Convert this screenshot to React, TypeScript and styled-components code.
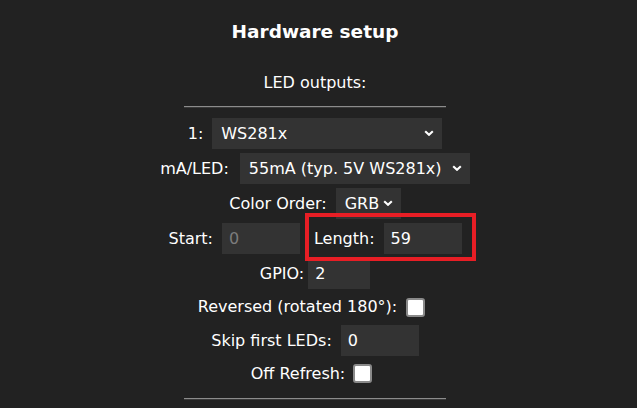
import React from "react";
import styled, { createGlobalStyle } from "styled-components";

const Global = createGlobalStyle`
  html, body { margin: 0; padding: 0; background: #222; }
  body {
    font-family: "DejaVu Sans", Verdana, sans-serif;
    color: #fff;
  }
`;

const Page = styled.main`
  width: 630px;
  min-height: 408px;
  display: flex;
  flex-direction: column;
  align-items: center;
`;

const Title = styled.h2`
  margin: 21px 0 0;
  font-size: 18.5px;
  line-height: 22px;
  font-weight: bold;
`;

const Subtitle = styled.h3`
  margin: 30px 0 0;
  font-size: 16px;
  line-height: 20px;
  font-weight: normal;
`;

const Rule = styled.hr<{ $mt: number }>`
  width: 262px;
  height: 0;
  margin: ${(p) => p.$mt}px 0 0;
  border: 0;
  border-top: 1px solid #8c8c8c;
  border-bottom: 1px solid #3a3a3a;
`;

const Rows = styled.section`
  margin-top: 8px;
  display: flex;
  flex-direction: column;
  align-items: stretch;
  width: 100%;
`;

const Row = styled.div<{ $h: number }>`
  height: ${(p) => p.$h}px;
  display: flex;
  align-items: center;
  justify-content: center;
  font-size: 16px;
  white-space: nowrap;
`;

const Label = styled.label<{ $gap?: number }>`
  margin-right: ${(p) => p.$gap ?? 9}px;
  line-height: 20px;
`;

const SelectWrap = styled.span`
  position: relative;
  display: inline-flex;
`;

const Select = styled.select<{ $w: number }>`
  appearance: none;
  -webkit-appearance: none;
  width: ${(p) => p.$w}px;
  height: 31px;
  box-sizing: border-box;
  padding: 0 20px 0 9px;
  border: 0;
  border-radius: 0;
  background: #333;
  color: #fff;
  font-family: inherit;
  font-size: 16px;
  outline: none;
`;

const ChevronIcon = styled.svg`
  position: absolute;
  right: 8px;
  top: 12px;
  width: 10px;
  height: 6px;
  pointer-events: none;
`;

const Input = styled.input<{ $w: number }>`
  width: ${(p) => p.$w}px;
  height: 31px;
  box-sizing: border-box;
  padding: 0 7px;
  border: 0;
  border-radius: 0;
  background: #333;
  color: #fff;
  font-family: inherit;
  font-size: 16px;
  outline: none;
  appearance: textfield;
  -moz-appearance: textfield;
  &::-webkit-inner-spin-button,
  &::-webkit-outer-spin-button {
    -webkit-appearance: none;
    margin: 0;
  }
  &:disabled {
    color: #7c7c7c;
  }
`;

const Check = styled.input`
  appearance: none;
  -webkit-appearance: none;
  width: 19px;
  height: 19px;
  box-sizing: border-box;
  margin: 0 7px 0 0;
  border: 2px solid #8a8a8a;
  border-radius: 3px;
  background: #fff;
`;

const Highlight = styled.span`
  position: relative;
  display: inline-flex;
  align-items: center;
  margin-left: 14px;
  &::after {
    content: "";
    position: absolute;
    top: -10px;
    bottom: -7px;
    left: -9px;
    right: -14px;
    border: 4px solid #e81e25;
    pointer-events: none;
  }
`;

const Chevron = () => (
  <ChevronIcon viewBox="0 0 10 6">
    <path d="M1.2 1.2 L5 4.8 L8.8 1.2" fill="none" stroke="#fff" strokeWidth="2.1" />
  </ChevronIcon>
);

const Dropdown = ({ w, value, options }: { w: number; value: string; options: string[] }) => (
  <SelectWrap>
    <Select $w={w} defaultValue={value}>
      {options.map((o) => (
        <option key={o}>{o}</option>
      ))}
    </Select>
    <Chevron />
  </SelectWrap>
);

export default function App() {
  return (
    <>
      <Global />
      <Page>
        <Title>Hardware setup</Title>
        <Subtitle>LED outputs:</Subtitle>
        <Rule $mt={13} />
        <Rows>
          <Row $h={35}>
            <Label>1:</Label>
            <Dropdown w={230} value="WS281x" options={["WS281x", "SK6812 RGBW", "TM1814", "WS2801", "APA102"]} />
          </Row>
          <Row $h={35}>
            <Label $gap={11}>mA/LED:</Label>
            <Dropdown w={230} value="55mA (typ. 5V WS281x)" options={["55mA (typ. 5V WS281x)", "35mA (eco WS2812)", "30mA (typ. 12V)"]} />
          </Row>
          <Row $h={35}>
            <Label>Color Order:</Label>
            <Dropdown w={65} value="GRB" options={["GRB"]} />
          </Row>
          <Row $h={35}>
            <Label>Start:</Label>
            <Input $w={78} type="number" defaultValue={0} disabled />
            <Highlight>
              <Label>Length:</Label>
              <Input $w={78} type="number" defaultValue={59} />
            </Highlight>
          </Row>
          <Row $h={35}>
            <Label $gap={4}>GPIO:</Label>
            <Input $w={62} type="number" defaultValue={2} />
          </Row>
          <Row $h={32}>
            <Label>Reversed (rotated 180°):</Label>
            <Check type="checkbox" />
          </Row>
          <Row $h={35}>
            <Label>Skip first LEDs:</Label>
            <Input $w={78} type="number" defaultValue={0} />
          </Row>
          <Row $h={31}>
            <Label $gap={8}>Off Refresh:</Label>
            <Check type="checkbox" />
          </Row>
        </Rows>
        <Rule $mt={9} />
      </Page>
    </>
  );
}
